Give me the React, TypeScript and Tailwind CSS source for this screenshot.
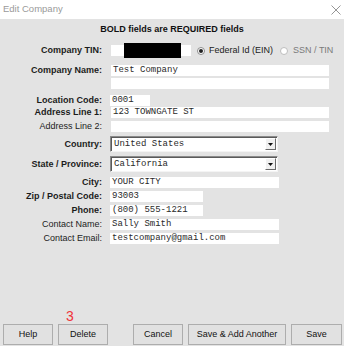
import React from 'react';

const SANS = "font-['Liberation_Sans',Arial,sans-serif]";
const MONO = "font-['Liberation_Mono','Courier_New',monospace]";

type FieldProps = {
  label: string;
  bold?: boolean;
  className?: string;
  children: React.ReactNode;
};

// one label + control line, label column right aligned
function Field({ label, bold, className = '', children }: FieldProps) {
  return (
    <div className={`grid grid-cols-[102px_1fr] gap-x-[8px] items-center ${className}`}>
      <span
        className={`text-right text-[9px] leading-none text-[#1c1c1c] whitespace-nowrap ${
          bold ? 'font-bold' : ''
        }`}
      >
        {label}
      </span>
      <div className="flex items-center h-full">{children}</div>
    </div>
  );
}

function TextBox({ value = '', width }: { value?: string; width: string }) {
  return (
    <div
      className={`${width} h-full bg-white ${MONO} text-[9px] leading-none text-[#2a2a2a] flex items-center pl-[2px] whitespace-nowrap overflow-hidden`}
    >
      {value}
    </div>
  );
}

function Select({ value }: { value: string }) {
  return (
    <div className="w-[168px] h-full bg-white border border-t-[#8a8a8a] border-l-[#8a8a8a] border-b-[#f4f4f4] border-r-[#f4f4f4] shadow-[inset_1px_1px_0_#5a5a5a] flex items-center">
      <span className={`flex-1 pl-[3px] ${MONO} text-[9px] leading-none text-[#2a2a2a]`}>{value}</span>
      <div className="w-[11px] h-[12px] mr-[1px] bg-[#f0f0f0] border border-t-white border-l-white border-b-[#6a6a6a] border-r-[#6a6a6a] flex items-center justify-center">
        <svg width="5" height="3" viewBox="0 0 5 3">
          <path d="M0 0h5L2.5 3z" fill="#111" />
        </svg>
      </div>
    </div>
  );
}

function Radio({ checked, dim }: { checked?: boolean; dim?: boolean }) {
  return (
    <span
      className={`w-[8px] h-[8px] rounded-full border bg-white flex items-center justify-center ${
        dim ? 'border-[#bdbdbd]' : 'border-[#8c8c8c]'
      }`}
    >
      {checked && <span className="w-[4px] h-[4px] rounded-full bg-[#222]" />}
    </span>
  );
}

function Button({ label, className }: { label: string; className: string }) {
  return (
    <button
      type="button"
      className={`${className} h-[21px] bg-[#e1e1e1] border border-[#adadad] ${SANS} text-[9px] leading-none text-[#111] flex items-center justify-center`}
    >
      {label}
    </button>
  );
}

export default function App() {
  return (
    <div className={`w-[344px] h-[346px] flex flex-col ${SANS} overflow-hidden`}>
      <div className="h-[19px] bg-white flex items-center justify-between pl-[3px] pr-[3px]">
        <span className="text-[9.5px] text-[#9a9a9a]">Edit Company</span>
        <svg width="10" height="10" viewBox="0 0 10 10">
          <path d="M0.5 0.5l9 9M9.5 0.5l-9 9" stroke="#8a8a8a" strokeWidth="0.9" />
        </svg>
      </div>

      <div className="flex-1 bg-[#e3e3e3] flex flex-col">
        <div className="mt-[4px] h-[14px] flex items-center justify-center text-[9px] font-bold text-[#111]">
          BOLD fields are REQUIRED fields
        </div>

        <Field label="Company TIN:" bold className="mt-[6px] h-[15px]">
          <div className="w-[80px] h-[11px] bg-white flex items-center ml-px">
            <div className="ml-[13px] w-[57px] h-[15px] bg-black" />
          </div>
          <div className="ml-[6px] flex items-center gap-[4px] text-[9px] leading-none text-[#222]">
            <Radio checked />
            <span>Federal Id (EIN)</span>
          </div>
          <div className="ml-[7px] flex items-center gap-[5px] text-[9px] leading-none text-[#7a7a7a]">
            <Radio dim />
            <span>SSN / TIN</span>
          </div>
        </Field>

        <Field label="Company Name:" bold className="mt-[7px] h-[11px]">
          <div className="ml-px h-full flex">
            <TextBox value="Test Company" width="w-[218px]" />
          </div>
        </Field>
        <Field label="" className="mt-[2px] h-[11px]">
          <div className="ml-px h-full flex">
            <TextBox width="w-[218px]" />
          </div>
        </Field>

        <Field label="Location Code:" bold className="mt-[6px] h-[11px]">
          <TextBox value="0001" width="w-[40px]" />
        </Field>
        <Field label="Address Line 1:" bold className="mt-[1px] h-[11px]">
          <div className="ml-px h-full flex">
            <TextBox value="123 TOWNGATE ST" width="w-[218px]" />
          </div>
        </Field>
        <Field label="Address Line 2:" className="mt-[3px] h-[11px]">
          <div className="ml-px h-full flex">
            <TextBox width="w-[218px]" />
          </div>
        </Field>

        <Field label="Country:" bold className="mt-[4px] h-[16px]">
          <Select value="United States" />
        </Field>
        <Field label="State / Province:" bold className="mt-[4px] h-[16px]">
          <Select value="California" />
        </Field>

        <Field label="City:" bold className="mt-[5px] h-[11px]">
          <TextBox value="YOUR CITY" width="w-[169px]" />
        </Field>
        <Field label="Zip / Postal Code:" bold className="mt-[3px] h-[11px]">
          <TextBox value="93003" width="w-[93px]" />
        </Field>
        <Field label="Phone:" bold className="mt-[3px] h-[11px]">
          <TextBox value="(800) 555-1221" width="w-[93px]" />
        </Field>
        <Field label="Contact Name:" className="mt-[3px] h-[11px]">
          <TextBox value="Sally Smith" width="w-[169px]" />
        </Field>
        <Field label="Contact Email:" className="mt-[3px] h-[11px]">
          <TextBox value="testcompany@gmail.com" width="w-[169px]" />
        </Field>

        <div className="flex-1" />

        <div className="pl-[66px] text-[14px] leading-[14px] text-[#f0353a]">3</div>
        <div className="mt-[1px] mb-px flex items-start pl-[3px]">
          <Button label="Help" className="w-[50px]" />
          <Button label="Delete" className="w-[50px] ml-[5px]" />
          <Button label="Cancel" className="w-[50px] ml-[25px]" />
          <Button label="Save & Add Another" className="w-[98px] ml-[5px]" />
          <Button label="Save" className="w-[51px] ml-[5px]" />
        </div>
      </div>
    </div>
  );
}
